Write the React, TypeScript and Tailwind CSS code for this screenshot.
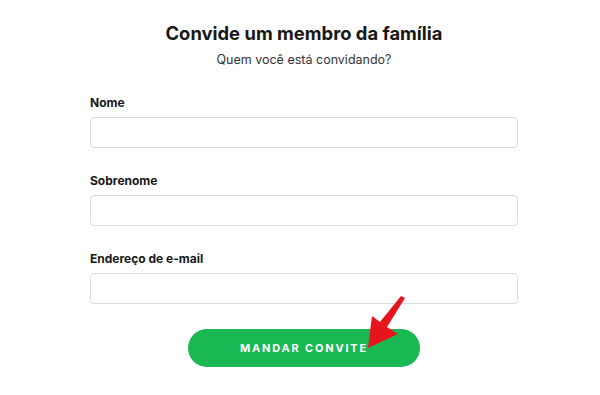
import React from "react";

const fields = ["Nome", "Sobrenome", "Endereço de e-mail"];

export default function App() {
    return (
        <div className="w-[600px] h-[395px] bg-white overflow-hidden relative font-['Inter','Liberation_Sans',sans-serif] text-[#181818]">
            <div className="flex flex-col items-center pt-[21px]">
                <h1 className="text-[18.4px] leading-[24px] font-bold pl-[8px]">Convide um membro da família</h1>
                <p className="mt-[7px] text-[12.5px] leading-[16px] text-[#333] pl-[8px]">Quem você está convidando?</p>
            </div>

            <div className="flex flex-col px-[90px] mt-[27px] gap-[25px]">
                {fields.map((label) => (
                    <div key={label} className="flex flex-col">
                        <label className="text-[12px] leading-[16px] font-bold">{label}</label>
                        <input className="mt-[6px] w-[428px] h-[31px] rounded-[4px] border border-[#dcdcdc] bg-white" />
                    </div>
                ))}
            </div>

            <div className="flex justify-center mt-[25px] pl-[8px]">
                <button className="w-[232px] h-[38px] rounded-full bg-[#1ab852] text-white text-[11px] font-bold tracking-[1.8px]">
                    MANDAR CONVITE
                </button>
            </div>

            {/* red pointer arrow drawn over the button */}
            <svg className="absolute left-0 top-0" width="600" height="395" viewBox="0 0 600 395">
                <path
                    d="M405 298 L387 327 L398 334 L368 348 L372 316 L380 322 L401 296 Z"
                    fill="#e8141b"
                />
            </svg>
        </div>
    );
}
